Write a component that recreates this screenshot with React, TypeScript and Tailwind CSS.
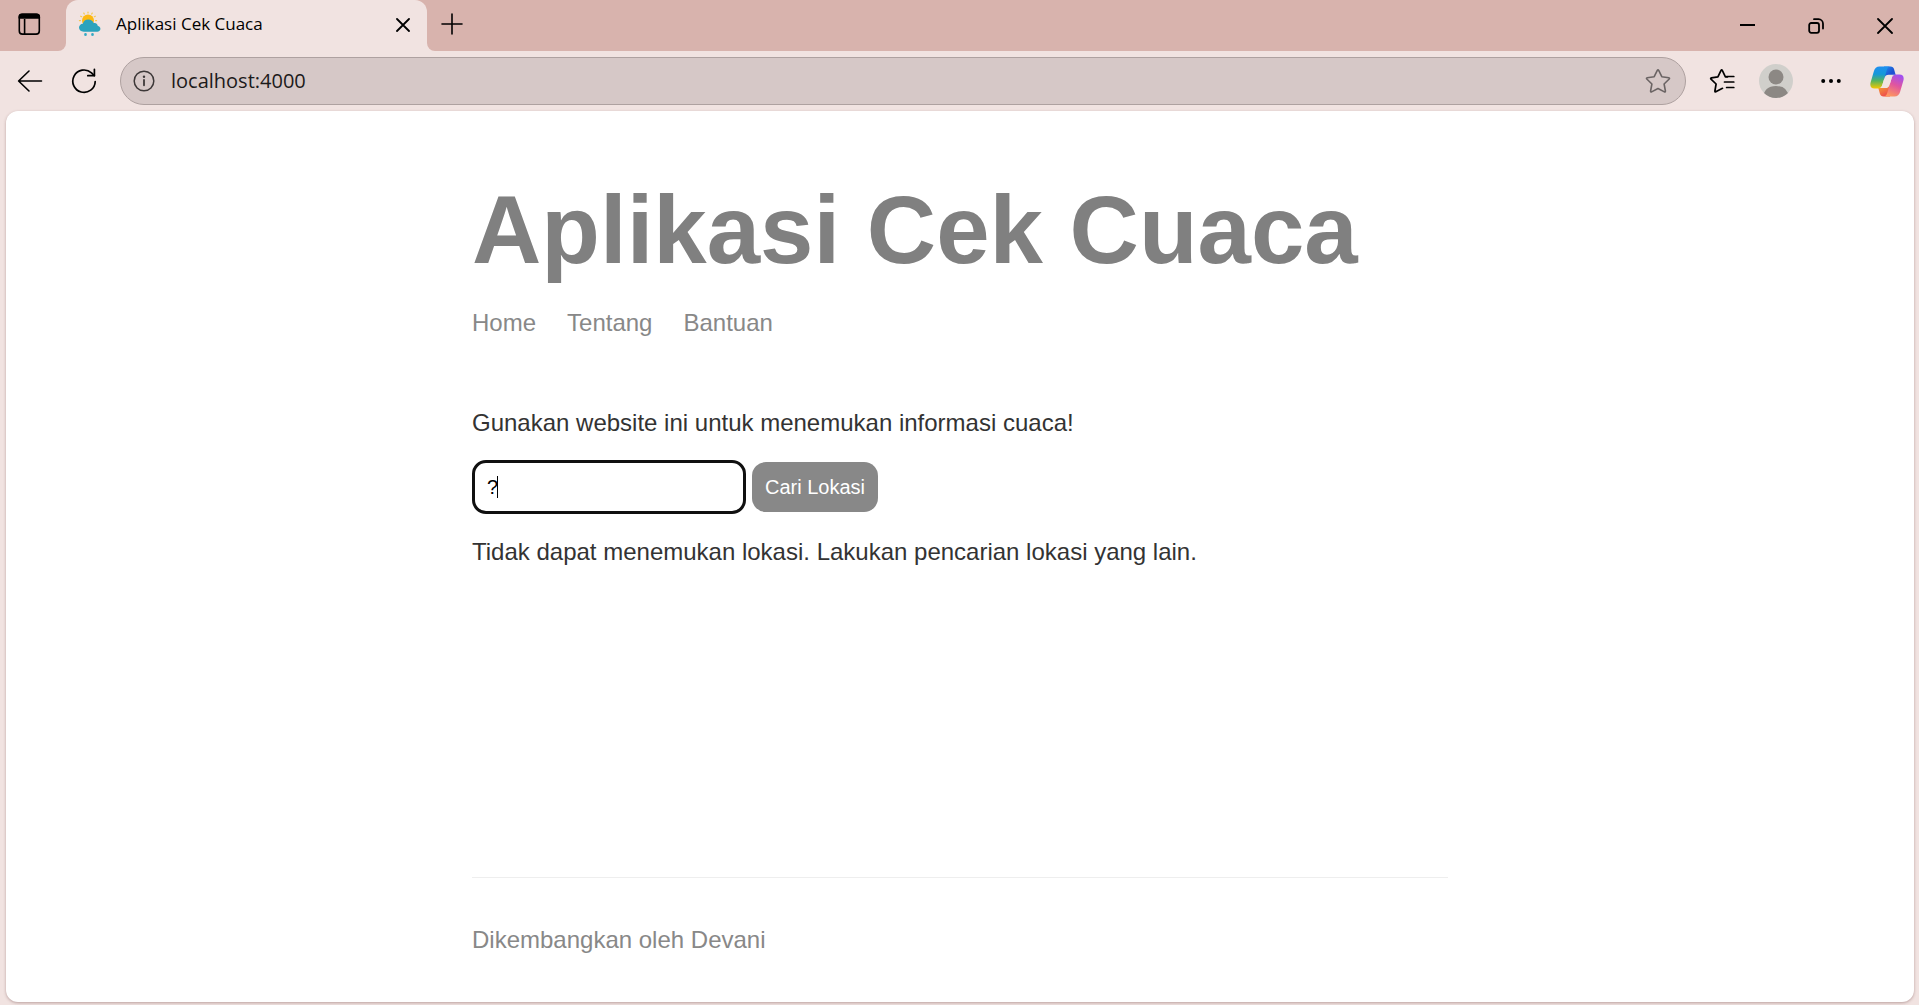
import React from "react";

const stroke = {
  fill: "none",
  stroke: "currentColor",
  strokeLinecap: "round" as const,
  strokeLinejoin: "round" as const,
};

function WorkspaceIcon() {
  return (
    <svg width="24" height="24" viewBox="0 0 24 24" {...stroke} strokeWidth="1.6" aria-hidden="true">
      <rect x="2.3" y="2.3" width="20" height="19.8" rx="3.2" />
      <path d="M2.3 6V4.8Q2.3 2.3 5 2.3h14.5q2.8 0 2.8 2.5V6z" fill="currentColor" />
      <path d="M7.6 7v15" strokeLinecap="butt" />
    </svg>
  );
}

function WeatherIcon() {
  return (
    <svg width="24" height="26" viewBox="0 0 24 26" aria-hidden="true">
      <g stroke="#f7c948" strokeWidth="1.2" strokeLinecap="round">
        <path d="M10 1v1M5.8 2.1l.5.9M14.2 2.1l-.5.9M2.7 5.2l.9.5M17.3 5.2l-.9.5M1.4 9.6h1M18.6 9.6h-1" />
      </g>
      <circle cx="10" cy="9.5" r="6" fill="#fdb913" />
      <path
        d="M5.8 20.7C2.8 20.7 1 18.9 1 16.6c0-2.2 1.7-3.8 3.8-3.9C5.4 10 7.6 8.5 10.3 8.5c2.5 0 4.5 1.3 5.3 3.5 2.6-.5 4.1 1 4.2 3 1.6.2 2.6 1.3 2.6 2.8 0 1.7-1.3 2.9-3.2 2.9z"
        fill="#2aa3bd"
      />
      <rect x="6.2" y="22" width="2.6" height="3" rx="1.3" fill="#36a9c4" />
      <rect x="13.2" y="22" width="2.6" height="3" rx="1.3" fill="#36a9c4" />
    </svg>
  );
}

function CrossIcon() {
  return (
    <svg width="16" height="16" viewBox="0 0 16 16" {...stroke} strokeWidth="1.8" aria-hidden="true">
      <path d="M1 1l14 14M15 1L1 15" />
    </svg>
  );
}

function SmallCrossIcon() {
  return (
    <svg width="14" height="14" viewBox="0 0 14 14" {...stroke} strokeWidth="1.8" aria-hidden="true">
      <path d="M1 1l12 12M13 1L1 13" />
    </svg>
  );
}

function PlusIcon() {
  return (
    <svg width="22" height="22" viewBox="0 0 22 22" {...stroke} strokeWidth="1.6" aria-hidden="true">
      <path d="M11 1v20M1 11h20" />
    </svg>
  );
}

function MinimizeIcon() {
  return (
    <svg width="16" height="16" viewBox="0 0 16 16" {...stroke} strokeWidth="2" strokeLinecap="butt" aria-hidden="true">
      <path d="M1 7h15" />
    </svg>
  );
}

function RestoreIcon() {
  return (
    <svg width="16" height="16" viewBox="0 0 16 16" {...stroke} strokeWidth="1.8" aria-hidden="true">
      <rect x="1.2" y="5" width="9.8" height="9.8" rx="2" />
      <path d="M6 1.2h4.5a4.5 4.5 0 0 1 4.5 4.5v4.8" />
    </svg>
  );
}

function BackIcon() {
  return (
    <svg width="26" height="24" viewBox="0 0 26 24" {...stroke} strokeWidth="1.6" aria-hidden="true">
      <path d="M24.5 12H1.8M12 2L1.6 12 12 22" />
    </svg>
  );
}

function ReloadIcon() {
  return (
    <svg width="26" height="26" viewBox="0 0 26 26" {...stroke} strokeWidth="1.7" aria-hidden="true">
      <path d="M24.2 13.5A11.2 11.2 0 1 1 20.5 4.900L23.3 7.6" />
      <path d="M23.4 1.3v6.4h-6.6" />
    </svg>
  );
}

function InfoIcon() {
  return (
    <svg width="22" height="22" viewBox="0 0 22 22" {...stroke} strokeWidth="1.5" aria-hidden="true">
      <circle cx="11" cy="11" r="9.8" />
      <path d="M11 10v5.3" strokeWidth="1.8" />
      <circle cx="11" cy="6.8" r="1.2" fill="currentColor" stroke="none" />
    </svg>
  );
}

function StarIcon() {
  return (
    <svg width="26" height="26" viewBox="0 0 26 26" {...stroke} strokeWidth="1.6" aria-hidden="true">
      <path d="M12.3 2.3q.7-1.2 1.4 0l3.1 6.400 7 1q1.200.3.400 1.300l-5.100 5 1.300 7q.1 1.200-1 .9L13 20.500l-6.400 3.400q-1.100.3-1-.9l1.300-7L1.800 11q-.8-1 .4-1.300l7-1z" />
    </svg>
  );
}

function FavoritesIcon() {
  return (
    <svg width="26" height="26" viewBox="0 0 26 26" {...stroke} strokeWidth="1.7" aria-hidden="true">
      <path d="M13.5 20.3l-6.700 3.500q-1 .3-.9-.8l1.200-7L2 11.200q-.8-1.100.4-1.400l6.500-.9 3-6.300q.8-1.300 1.500 0l3 6.200 2.100.2" />
      <path d="M17.6 8.500h7.200M15.500 14h9.300M17.600 19.500h7.200" />
    </svg>
  );
}

function AvatarIcon() {
  return (
    <svg width="34" height="34" viewBox="0 0 34 34" aria-hidden="true">
      <defs>
        <clipPath id="avatar-clip">
          <circle cx="17" cy="17" r="17" />
        </clipPath>
      </defs>
      <circle cx="17" cy="17" r="17" fill="#d0cfcb" />
      <g clipPath="url(#avatar-clip)" fill="#8c8884">
        <circle cx="17" cy="13" r="7.5" />
        <path d="M4 34q1-12 13-12t13 12z" />
      </g>
    </svg>
  );
}

function DotsIcon() {
  return (
    <svg width="20" height="6" viewBox="0 0 20 6" fill="currentColor" aria-hidden="true">
      <circle cx="2.2" cy="3" r="2" />
      <circle cx="10" cy="3" r="2" />
      <circle cx="17.8" cy="3" r="2" />
    </svg>
  );
}

function CopilotIcon() {
  return (
    <svg width="34" height="31" viewBox="0 0 34 31" aria-hidden="true">
      <defs>
        <linearGradient id="cp-left" x1="0" y1="0" x2="0" y2="1">
          <stop offset="0" stopColor="#1f8ff0" />
          <stop offset="0.35" stopColor="#1698d8" />
          <stop offset="0.65" stopColor="#56b45c" />
          <stop offset="1" stopColor="#f4c800" />
        </linearGradient>
        <linearGradient id="cp-right" x1="0.7" y1="0" x2="0.3" y2="1">
          <stop offset="0" stopColor="#a14ff0" />
          <stop offset="0.45" stopColor="#e0559f" />
          <stop offset="1" stopColor="#ff9a5c" />
        </linearGradient>
        <linearGradient id="cp-top" x1="0" y1="0" x2="1" y2="1">
          <stop offset="0" stopColor="#1f8ff0" />
          <stop offset="0.6" stopColor="#1f4fd0" />
          <stop offset="1" stopColor="#2a55e6" />
        </linearGradient>
        <linearGradient id="cp-bottom" x1="0" y1="0" x2="0.5" y2="1">
          <stop offset="0" stopColor="#f6b02c" />
          <stop offset="1" stopColor="#ee4d4d" />
        </linearGradient>
      </defs>
      <path d="M14 .5h6.500c2 0 3 .9 3.500 2.500L25.700 9 14 13z" fill="url(#cp-top)" />
      <path d="M20 30.500h-6.500c-2 0-3-.9-3.500-2.500L8.300 22 20 18z" fill="url(#cp-bottom)" />
      <path d="M9.500.5h11c-2 0-3 1.300-3.700 3.500l-4.500 15c-.7 2.300-2 3.500-4.300 3.500H4.500C1 22.500-.3 20 .6 16.500L3.800 5.500C4.800 2.200 6.500.5 9.500.5z" fill="url(#cp-left)" />
      <path d="M24.500 30.500h-11c2 0 3-1.300 3.700-3.500l4.500-15c.7-2.300 2-3.500 4.300-3.500h3.500c3.500 0 4.800 2.500 3.900 6l-3.200 11c-1 3.300-2.700 5-5.700 5z" fill="url(#cp-right)" />
      <path d="M18.800 8.800h6.200c-2 .3-2.800 1.400-3.400 3.400l-1.900 6.300c-.8 2.600-1.800 3.600-4.200 3.600H9c2-.3 2.800-1.400 3.400-3.400l1.900-6.300c.8-2.600 2-3.600 4.500-3.600z" fill="#f1e3e1" />
    </svg>
  );
}

function IconButton({ label, className = "", children }: { label: string; className?: string; children: React.ReactNode }) {
  return (
    <button type="button" aria-label={label} className={`flex shrink-0 items-center justify-center ${className}`}>
      {children}
    </button>
  );
}

function TabStrip() {
  return (
    <header className="flex h-[51px] items-stretch bg-[#d8b3ad]">
      <IconButton label="Tab actions" className="w-[58px] pb-1">
        <WorkspaceIcon />
      </IconButton>
      <div className="size-2 shrink-0 self-end bg-[#f1e3e1]">
        <div className="size-2 rounded-br-lg bg-[#d8b3ad]" />
      </div>
      <div className="flex w-[361px] shrink-0 items-center rounded-t-xl bg-[#f1e3e1] pr-[14px] pb-1 pl-3">
        <WeatherIcon />
        <span className="ml-[14px] grow text-[17px] leading-6 whitespace-nowrap">Aplikasi Cek Cuaca</span>
        <IconButton label="Close tab" className="size-5 pt-[2px]">
          <SmallCrossIcon />
        </IconButton>
      </div>
      <div className="size-2 shrink-0 self-end bg-[#f1e3e1]">
        <div className="size-2 rounded-bl-lg bg-[#d8b3ad]" />
      </div>
      <IconButton label="New tab" className="w-[34px] pb-1">
        <PlusIcon />
      </IconButton>
      <div className="grow" />
      <IconButton label="Minimize" className="w-[69px]">
        <MinimizeIcon />
      </IconButton>
      <IconButton label="Restore" className="w-[69px]">
        <RestoreIcon />
      </IconButton>
      <IconButton label="Close window" className="w-[69px]">
        <CrossIcon />
      </IconButton>
    </header>
  );
}

function Toolbar() {
  return (
    <div className="flex h-[60px] items-center pr-[15px] pl-[17px]">
      <IconButton label="Back">
        <BackIcon />
      </IconButton>
      <IconButton label="Reload" className="ml-7">
        <ReloadIcon />
      </IconButton>
      <div className="ml-[23px] flex h-12 grow items-center rounded-full border border-[#aea1a0] bg-[#d6c8c7] pr-[14px] pl-3">
        <IconButton label="Site information" className="text-[#3d3838]">
          <InfoIcon />
        </IconButton>
        <input
          type="text"
          aria-label="Address"
          defaultValue="localhost:4000"
          className="ml-4 grow bg-transparent text-xl leading-7 text-[#1c1a1a] outline-none"
        />
        <IconButton label="Add to favorites" className="text-[#6b6464]">
          <StarIcon />
        </IconButton>
      </div>
      <IconButton label="Favorites" className="ml-[23px]">
        <FavoritesIcon />
      </IconButton>
      <IconButton label="Profile" className="ml-6">
        <AvatarIcon />
      </IconButton>
      <IconButton label="Settings and more" className="ml-7">
        <DotsIcon />
      </IconButton>
      <IconButton label="Copilot" className="ml-[29px]">
        <CopilotIcon />
      </IconButton>
    </div>
  );
}

function WeatherPage() {
  return (
    <div className="mr-[5px] mb-[3px] ml-[6px] flex grow flex-col rounded-xl bg-white font-['Liberation_Sans',Arial,sans-serif] text-2xl leading-7 text-[#333333] shadow-[0_1px_3px_rgba(120,80,80,0.45)]">
      <div className="mx-auto flex w-full max-w-[976px] grow flex-col pt-16 pb-12">
        <h1 className="text-[96px] leading-[110px] font-bold whitespace-nowrap text-[#808080]">Aplikasi Cek Cuaca</h1>
        <nav className="mt-6 flex gap-[31px] text-[#888888]">
          <a href="#home">Home</a>
          <a href="#tentang">Tentang</a>
          <a href="#bantuan">Bantuan</a>
        </nav>
        <main className="mt-[72px] grow">
          <p>Gunakan website ini untuk menemukan informasi cuaca!</p>
          <form className="mt-[23px] flex items-center gap-[6px] text-xl" onSubmit={(e) => e.preventDefault()}>
            <div className="relative">
              <input
                type="text"
                aria-label="Lokasi"
                defaultValue="?"
                className="block h-[54px] w-[274px] rounded-[14px] border-[3px] border-[#101010] bg-white px-3 text-black caret-transparent outline-none"
              />
              <span className="absolute top-4 left-[25px] h-[22px] w-px bg-black" />
            </div>
            <button type="submit" className="h-[50px] rounded-[14px] bg-[#888888] px-[13px] text-white">
              Cari Lokasi
            </button>
          </form>
          <p className="mt-6">Tidak dapat menemukan lokasi. Lakukan pencarian lokasi yang lain.</p>
        </main>
        <footer className="border-t border-[#eeeeee] pt-12 text-[#888888]">Dikembangkan oleh Devani</footer>
      </div>
    </div>
  );
}

export default function App() {
  return (
    <div className="flex min-h-screen flex-col bg-[#f1e3e1] font-['Open_Sans',sans-serif] text-black">
      <TabStrip />
      <Toolbar />
      <WeatherPage />
    </div>
  );
}
